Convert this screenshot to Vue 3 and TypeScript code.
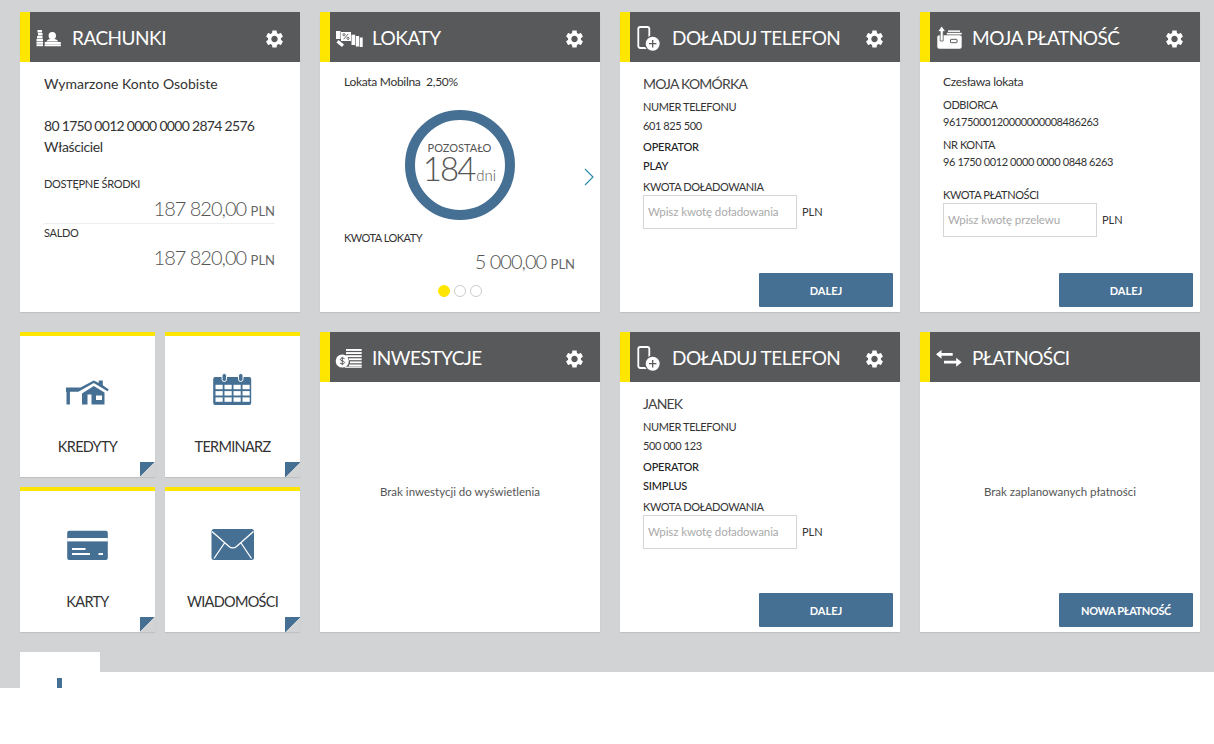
<script setup lang="ts">
type Kind = "rachunki" | "lokaty" | "phone" | "payment" | "empty" | "tiles";

interface Card {
  kind: Kind;
  title?: string;
  icon?: string;
  gear?: boolean;
  name?: string;
  number?: string;
  operator?: string;
  message?: string;
  button?: string;
}

// ikony naglowkow, viewBox 42x50
const icons: Record<string, string> = {
  rachunki: `
    <g fill="#fff">
      <rect x="7.500" y="18" width="4.500" height="2.500"/><rect x="8" y="21" width="4.500" height="2.500"/>
      <rect x="7" y="24" width="5.500" height="2.500"/><rect x="6.500" y="27" width="6.500" height="2.300"/>
      <rect x="6.500" y="29.800" width="6.500" height="2"/><rect x="6.500" y="32.200" width="6.500" height="2"/>
      <circle cx="22.300" cy="23.700" r="3.700"/>
      <path d="M16.500 29.500c.6-2 2.800-2.800 5.800-2.800s5.200.8 5.800 2.800z"/>
      <rect x="14.500" y="30" width="16.500" height="2" rx=".9"/><rect x="14.500" y="32.300" width="16.500" height="2" rx=".9"/>
    </g>`,
  lokaty: `
    <g fill="#fff">
      <path d="M6 19h4.500v8H6z"/>
      <path d="M11 20h10v9H11z"/>
      <path d="M8.500 28l5.500 4.500-2 2.500-5.500-4.500z"/>
      <path d="M21.500 22.700h3.700V33h-3.700z"/><path d="M25.800 24h3.300v10.500h-3.300z"/><path d="M29.700 25.500h3V35h-3z"/>
    </g>
    <g fill="none" stroke="#58595b" stroke-width=".9">
      <circle cx="14" cy="22.700" r="1.100"/><circle cx="18" cy="26.300" r="1.100"/><path d="M18.300 21.800l-4.600 5.400"/>
    </g>`,
  phone: `
    <rect x="8.300" y="15" width="11" height="21" rx="2" fill="none" stroke="#fff" stroke-width="1.800"/>
    <circle cx="22.700" cy="31.700" r="8.200" fill="#58595b"/>
    <circle cx="22.700" cy="31.700" r="7" fill="#fff"/>
    <path d="M22.700 28v7.400M19 31.700h7.400" stroke="#58595b" stroke-width="1.300"/>`,
  payment: `
    <rect x="7.300" y="23.300" width="24.400" height="13.400" rx="2" fill="#fff"/>
    <rect x="16.800" y="20.800" width="14.900" height="1.700" fill="#fff"/>
    <rect x="18" y="18.400" width="12" height="1.500" fill="#fff"/>
    <path d="M10.200 19.500H7.800L11.700 14l3.900 5.500h-2.400V29h-3z" fill="#fff" stroke="#58595b" stroke-width=".8"/>
    <rect x="20.500" y="27.300" width="6.500" height="3.400" rx=".6" fill="none" stroke="#58595b"/>`,
  inwestycje: `
    <g fill="#fff">
      <rect x="16" y="17" width="15.700" height="1.900"/><rect x="16" y="20.100" width="15.700" height="1.900"/>
      <rect x="16" y="23.200" width="15.700" height="1.900"/><rect x="19" y="26.300" width="12.700" height="1.900"/>
      <rect x="20" y="29.400" width="11.700" height="1.900"/><rect x="19" y="32.500" width="12.700" height="1.900"/>
      <rect x="15" y="34.600" width="16.700" height="1.200"/>
      <circle cx="12.300" cy="29" r="6.600"/>
    </g>
    <path d="M14.600 26.800c-.6-.9-3.800-1.200-4.300.4-.5 2 4.500 1.300 4.200 3.500-.3 1.600-3.700 1.500-4.500.2M12.300 24.800v8.400" fill="none" stroke="#58595b" stroke-width="1"/>`,
  platnosci: `
    <g fill="#fff">
      <path d="M6 22.300l5.500-4.300v3h11.200v2.700H11.500v3z"/>
      <path d="M31.700 30.200l-5.500-4.500v3.100H14v2.700h12.200v3.200z"/>
    </g>`,
};

const cards: Card[] = [
  { kind: "rachunki", title: "RACHUNKI", icon: "rachunki", gear: true },
  { kind: "lokaty", title: "LOKATY", icon: "lokaty", gear: true },
  {
    kind: "phone",
    title: "DOŁADUJ TELEFON",
    icon: "phone",
    gear: true,
    name: "MOJA KOMÓRKA",
    number: "601 825 500",
    operator: "PLAY",
  },
  { kind: "payment", title: "MOJA PŁATNOŚĆ", icon: "payment", gear: true },
  { kind: "tiles" },
  {
    kind: "empty",
    title: "INWESTYCJE",
    icon: "inwestycje",
    gear: true,
    message: "Brak inwestycji do wyświetlenia",
  },
  {
    kind: "phone",
    title: "DOŁADUJ TELEFON",
    icon: "phone",
    gear: true,
    name: "JANEK",
    number: "500 000 123",
    operator: "SIMPLUS",
  },
  {
    kind: "empty",
    title: "PŁATNOŚCI",
    icon: "platnosci",
    message: "Brak zaplanowanych płatności",
    button: "NOWA PŁATNOŚĆ",
  },
];

const tiles = ["KREDYTY", "TERMINARZ", "KARTY", "WIADOMOŚCI"];
const gearPath =
  "M19.14 12.94c.04-.3.06-.61.06-.94 0-.32-.02-.64-.07-.94l2.03-1.58c.18-.14.23-.41.12-.61l-1.92-3.32c-.12-.22-.37-.29-.59-.22l-2.39.96c-.5-.38-1.03-.7-1.62-.94l-.36-2.54c-.04-.24-.24-.41-.48-.41h-3.84c-.24 0-.43.17-.47.41l-.36 2.54c-.59.24-1.13.57-1.62.94l-2.39-.96c-.22-.08-.47 0-.59.22L2.74 8.87c-.12.21-.08.47.12.61l2.03 1.58c-.05.3-.09.63-.09.94s.02.64.07.94l-2.03 1.58c-.18.14-.23.41-.12.61l1.92 3.32c.12.22.37.29.59.22l2.39-.96c.5.38 1.03.7 1.62.94l.36 2.54c.05.24.24.41.48.41h3.84c.24 0 .44-.17.47-.41l.36-2.54c.59-.24 1.13-.56 1.62-.94l2.39.96c.22.08.47 0 .59-.22l1.92-3.32c.12-.22.07-.47-.12-.61l-2.01-1.58zM12 15.6c-1.98 0-3.6-1.62-3.6-3.6s1.62-3.6 3.6-3.6 3.6 1.62 3.6 3.6-1.62 3.6-3.6 3.6z";
</script>

<template>
  <div class="page">
    <main class="grid">
      <template v-for="(card, i) in cards" :key="i">
        <!-- KAFELKI -->
        <div v-if="card.kind === 'tiles'" class="tiles">
          <a v-for="(t, ti) in tiles" :key="t" class="tile">
            <svg class="tile-icon" viewBox="0 0 44 44">
              <g v-if="ti === 0" fill="#456f93">
                <path d="M0 15.500h14.500l13.300-7 5 2.600V8.500h4v4.800l6 4.200-1.300 1.700-13.700-8.300-15.500 8.800H0z" />
                <rect x="0.500" y="18" width="3.400" height="14.500" />
                <path d="M16 21.500l11.800-7.500 10.700 6.500v12H25.500v-10h-4v10H16z" />
              </g>
              <rect v-if="ti === 0" x="30" y="23.500" width="6" height="4.500" fill="#fff" />
              <g v-if="ti === 1">
                <rect x="2.200" y="5" width="38" height="28" rx="2" fill="#456f93" />
                <g fill="#456f93" stroke="#fff" stroke-width="1">
                  <rect x="11" y="1.500" width="4.500" height="8" rx="2.200" />
                  <rect x="27.500" y="1.500" width="4.500" height="8" rx="2.200" />
                </g>
                <g fill="#fff">
                  <template v-for="r in 3" :key="r">
                    <rect v-for="c in 4" :key="c" :x="-4.500 + c * 9" :y="6.500 + r * 6.300" width="7.200" height="4.400" />
                  </template>
                </g>
              </g>
              <g v-if="ti === 2">
                <rect x="1.200" y="3.700" width="40.600" height="29.300" rx="2" fill="#456f93" />
                <rect x="1.200" y="11" width="40.600" height="3.400" fill="#fff" />
                <g fill="#fff">
                  <rect x="6" y="21" width="13.500" height="2" />
                  <rect x="6" y="26" width="18" height="2" />
                  <rect x="32.500" y="26" width="4.500" height="2" />
                </g>
              </g>
              <g v-if="ti === 3">
                <rect x="0.500" y="2" width="42.500" height="31" rx="2.500" fill="#456f93" />
                <path d="M1 4.500l17 15c2 1.800 5.500 1.800 7.500 0l17-15M3 31.500l10.500-15.500M40.500 31.500L30 16" fill="none" stroke="#fff" stroke-width="1.300" />
              </g>
            </svg>
            <span class="tile-label">{{ t }}</span>
            <i class="tile-corner"></i>
          </a>
        </div>

        <section v-else class="card">
          <header class="head">
            <svg class="head-icon" viewBox="0 0 42 50" v-html="icons[card.icon!]"></svg>
            <h2 class="head-title">{{ card.title }}</h2>
            <svg v-if="card.gear" class="gear" viewBox="2.500 2 19 20"><path :d="gearPath" fill="#fff" /></svg>
          </header>

          <!-- RACHUNKI -->
          <div v-if="card.kind === 'rachunki'" class="body acc">
            <p class="acc-name">Wymarzone Konto Osobiste</p>
            <p class="acc-no">80 1750 0012 0000 0000 2874 2576</p>
            <p class="acc-owner">Właściciel</p>
            <div class="acc-row first">
              <div class="lbl">DOSTĘPNE ŚRODKI</div>
              <div class="amount">187 820,00 <small>PLN</small></div>
            </div>
            <div class="acc-row">
              <div class="lbl">SALDO</div>
              <div class="amount">187 820,00 <small>PLN</small></div>
            </div>
          </div>

          <!-- LOKATY -->
          <div v-else-if="card.kind === 'lokaty'" class="body dep">
            <p class="dep-name">Lokata Mobilna&nbsp; 2,50%</p>
            <div class="ring">
              <span class="ring-top">POZOSTAŁO</span>
              <span class="ring-days">184<small>dni</small></span>
            </div>
            <svg class="next" viewBox="0 0 10 18"><path d="M1 1l8 8-8 8" fill="none" stroke="#2f8fa8" stroke-width="1.200" /></svg>
            <div class="lbl dep-lbl">KWOTA LOKATY</div>
            <div class="amount dep-amount">5 000,00 <small>PLN</small></div>
            <div class="dots"><i class="on"></i><i></i><i></i></div>
          </div>

          <!-- DOLADOWANIE -->
          <div v-else-if="card.kind === 'phone'" class="body form">
            <p class="f-name">{{ card.name }}</p>
            <p class="f-line l1">NUMER TELEFONU</p>
            <p class="f-line l2">{{ card.number }}</p>
            <p class="f-line l3 strong">OPERATOR</p>
            <p class="f-line l2 strong">{{ card.operator }}</p>
            <p class="f-line l3">KWOTA DOŁADOWANIA</p>
            <div class="amount-field">
              <input class="input" placeholder="Wpisz kwotę doładowania" />
              <span>PLN</span>
            </div>
            <button class="btn">DALEJ</button>
          </div>

          <!-- MOJA PLATNOSC -->
          <div v-else-if="card.kind === 'payment'" class="body form">
            <p class="p-name">Czesława lokata</p>
            <p class="f-line p1">ODBIORCA</p>
            <p class="f-line p2">96175000120000000008486263</p>
            <p class="f-line p3">NR KONTA</p>
            <p class="f-line p2">96 1750 0012 0000 0000 0848 6263</p>
            <p class="f-line p4">KWOTA PŁATNOŚCI</p>
            <div class="amount-field">
              <input class="input" placeholder="Wpisz kwotę przelewu" />
              <span>PLN</span>
            </div>
            <button class="btn">DALEJ</button>
          </div>

          <!-- PUSTE -->
          <div v-else class="body empty">
            <p class="empty-msg">{{ card.message }}</p>
            <button v-if="card.button" class="btn btn-abs">{{ card.button }}</button>
          </div>
        </section>
      </template>
    </main>

    <footer class="foot">
      <div class="foot-tab"><i></i></div>
      <div class="foot-rest"></div>
    </footer>
  </div>
</template>

<style>
html,
body {
  background: #fff;
  margin: 0;
}
</style>

<style scoped>
.page {
  background: #d1d3d4;
  font-family: Lato, "Noto Sans", sans-serif;
  color: #333;
}

.grid {
  display: grid;
  grid-template-columns: repeat(4, 280px);
  grid-auto-rows: 300px;
  gap: 20px;
  padding: 12px 0 0 20px;
}

p {
  margin: 0;
}

.card {
  display: flex;
  flex-direction: column;
  background: #fff;
  box-shadow: 0 1px 1px rgba(0, 0, 0, 0.08);
}

/* naglowek */
.head {
  display: flex;
  align-items: center;
  height: 50px;
  flex: none;
  background: #58595b;
  border-left: 10px solid #ffe600;
  color: #fff;
}

.head-icon {
  width: 42px;
  height: 50px;
  flex: none;
}

.head-title {
  margin: 0;
  flex: 1;
  padding-top: 2px;
  font-size: 19px;
  font-weight: 400;
  letter-spacing: -0.5px;
  line-height: 48px;
  white-space: nowrap;
}

.gear {
  width: 17px;
  height: 18px;
  margin: 4px 17px 0 0;
  flex: none;
}

.body {
  flex: 1;
  position: relative;
  display: flex;
  flex-direction: column;
  min-height: 0;
}

.lbl {
  font-size: 11px;
  letter-spacing: -0.3px;
  line-height: 14px;
}

.amount {
  font-size: 20px;
  font-weight: 300;
  letter-spacing: -1px;
  line-height: 24px;
  text-align: right;
  color: #555;
}

.amount small {
  font-size: 13px;
  font-weight: 400;
  letter-spacing: 0;
  color: #666;
}

/* rachunki */
.acc {
  padding: 12px 25px 0 24px;
  font-size: 14px;
}

.acc-name {
  line-height: 20px;
}

.acc-no {
  margin-top: 22px;
  line-height: 20px;
  letter-spacing: -0.7px;
  white-space: nowrap;
}

.acc-owner {
  margin-top: 1px;
  line-height: 20px;
  letter-spacing: -0.4px;
}

.acc-row {
  padding-top: 2px;
}

.acc-row.first {
  margin-top: 17px;
  padding-top: 3px;
  border-bottom: 1px solid #eee;
}

.acc-row .amount {
  margin-top: 5px;
}

/* lokaty */
.dep {
  padding: 13px 25px 0 24px;
}

.dep-name {
  font-size: 12px;
  letter-spacing: -0.3px;
  line-height: 14px;
}

.ring {
  box-sizing: border-box;
  width: 110px;
  height: 110px;
  margin: 21px auto 0;
  border: 10px solid #456f93;
  border-radius: 50%;
  display: flex;
  flex-direction: column;
  align-items: center;
  padding-top: 21px;
  color: #555;
}

.ring-top {
  font-size: 11px;
  line-height: 14px;
}

.ring-days {
  font-size: 33px;
  font-weight: 300;
  letter-spacing: -2px;
  line-height: 26px;
  white-space: nowrap;
}

.ring-days small {
  font-size: 15px;
  letter-spacing: 0;
  margin-left: 2px;
}

.next {
  position: absolute;
  left: 264px;
  top: 106px;
  width: 10px;
  height: 18px;
}

.dep-lbl {
  margin-top: 11px;
  letter-spacing: -0.5px;
}

.dep-amount {
  margin-top: 4px;
}

.dots {
  display: flex;
  justify-content: center;
  gap: 4px;
  margin-top: 9px;
}

.dots i {
  box-sizing: border-box;
  width: 12px;
  height: 12px;
  border-radius: 50%;
  border: 1px solid #ccc;
}

.dots i.on {
  background: #ffe600;
  border-color: #ffe600;
}

/* formularze */
.form {
  padding: 12px 7px 5px 23px;
}

.f-name {
  font-size: 14px;
  letter-spacing: -0.8px;
  line-height: 20px;
  color: #444;
}

.f-line {
  font-size: 11px;
  letter-spacing: -0.4px;
  line-height: 14px;
}

.f-line.strong {
  font-weight: 500;
  letter-spacing: -0.2px;
  color: #222;
}

.l1 {
  margin-top: 6px;
}

.l2 {
  margin-top: 5px;
}

.l3 {
  margin-top: 7px;
}

.p-name {
  font-size: 12px;
  letter-spacing: -0.3px;
  line-height: 14px;
  margin-top: 1px;
}

.p1 {
  margin-top: 9px;
}

.p2 {
  margin-top: 3px;
}

.p3 {
  margin-top: 9px;
}

.p4 {
  margin-top: 19px;
}

.amount-field {
  display: flex;
  align-items: center;
  gap: 5px;
  margin-top: 1px;
  font-size: 11px;
}

.amount-field span {
  padding-bottom: 2px;
}

.input {
  box-sizing: border-box;
  width: 154px;
  height: 34px;
  padding: 0 4px 2px;
  border: 1px solid #d5d5d5;
  border-radius: 0;
  background: #fff;
  font: inherit;
  font-size: 11.500px;
  letter-spacing: -0.1px;
  outline: none;
}

.input::placeholder {
  color: #aaa;
  opacity: 1;
}

.btn {
  width: 134px;
  height: 34px;
  margin-top: auto;
  align-self: flex-end;
  padding: 0;
  border: 0;
  border-radius: 1px;
  background: #456f93;
  color: #fff;
  font-family: inherit;
  font-size: 11px;
  font-weight: 700;
}

.btn-abs {
  position: absolute;
  right: 7px;
  bottom: 5px;
  letter-spacing: -0.4px;
}

/* puste */
.empty {
  align-items: center;
  padding-top: 103px;
}

.empty-msg {
  font-size: 11.500px;
  line-height: 14px;
  color: #555;
}

/* kafelki */
.tiles {
  display: grid;
  grid-template-columns: 135px 135px;
  grid-template-rows: 145px 145px;
  gap: 10px;
}

.tile {
  position: relative;
  display: flex;
  flex-direction: column;
  align-items: center;
  box-sizing: border-box;
  background: #fff;
  border-top: 4px solid #ffe600;
  box-shadow: 0 1px 1px rgba(0, 0, 0, 0.08);
}

.tile-icon {
  width: 44px;
  height: 44px;
  margin-top: 36px;
}

.tile-label {
  margin-top: 21px;
  font-size: 14.500px;
  letter-spacing: -0.7px;
  line-height: 20px;
  color: #333;
}

.tile-corner {
  position: absolute;
  right: 0;
  bottom: 0;
  width: 15px;
  height: 15px;
  background: linear-gradient(135deg, #456f93 50%, #d1d3d4 50%);
}

/* stopka */
.foot {
  display: flex;
  height: 36px;
  margin-top: 20px;
  padding-left: 20px;
}

.foot-tab {
  position: relative;
  width: 80px;
  background: #fff;
  overflow: hidden;
}

.foot-tab i {
  position: absolute;
  left: 37px;
  top: 26px;
  width: 5px;
  height: 14px;
  background: #456f93;
}

.foot-rest {
  flex: 1;
  margin-top: 20px;
  background: #fff;
}
</style>
